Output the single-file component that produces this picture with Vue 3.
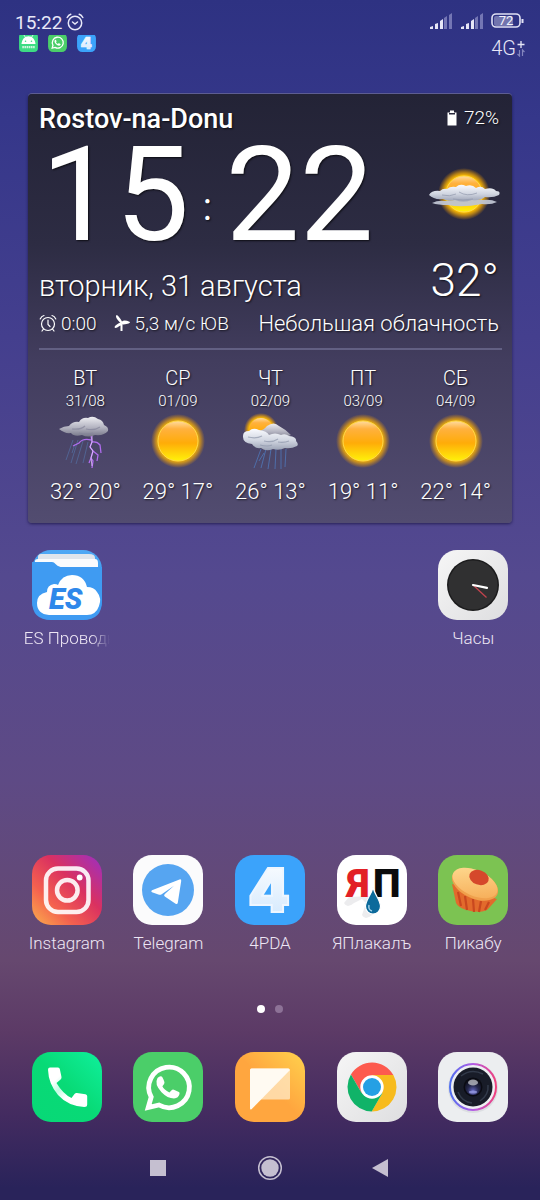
<script setup>
import { ref } from 'vue';

const time = ref({ hours: '15', minutes: '22' });
const battery = ref(72);

const forecast = ref([
  { day: 'ВТ', date: '31/08', icon: 'storm', high: 32, low: 20 },
  { day: 'СР', date: '01/09', icon: 'sun', high: 29, low: 17 },
  { day: 'ЧТ', date: '02/09', icon: 'shower', high: 26, low: 13 },
  { day: 'ПТ', date: '03/09', icon: 'sun', high: 19, low: 11 },
  { day: 'СБ', date: '04/09', icon: 'sun', high: 22, low: 14 }
]);

// Lettering that sits on top of an icon's artwork
const letters = {
  es: [{ text: 'ES', x: 17, y: 59, kind: 'logo-es' }],
  fourpda: [{ text: '4', x: 13, y: 57, kind: 'logo-four' }],
  yap: [
    { text: 'Я', x: 10, y: 42, kind: 'logo-yap red' },
    { text: 'П', x: 36, y: 42, kind: 'logo-yap' }
  ]
};

const topApps = [
  { icon: 'es', name: 'ES Проводник', long: true, side: 'first' },
  { icon: 'clock', name: 'Часы', side: 'last' }
];

const bottomApps = [
  { icon: 'instagram', name: 'Instagram' },
  { icon: 'telegram', name: 'Telegram' },
  { icon: 'fourpda', name: '4PDA' },
  { icon: 'yap', name: 'ЯПлакалъ' },
  { icon: 'pikabu', name: 'Пикабу' }
];

const dock = [
  { icon: 'phone', name: 'Телефон' },
  { icon: 'whatsapp', name: 'WhatsApp' },
  { icon: 'messages', name: 'Сообщения' },
  { icon: 'chrome', name: 'Chrome' },
  { icon: 'camera', name: 'Камера' }
];

const notifications = ['android', 'whatsapp', 'fourpda'];

const page = ref(0);
</script>

<template>
  <div class="screen">
    <!-- Shared icon sprite -->
    <svg class="sprite" aria-hidden="true">
      <defs>
        <linearGradient id="g-es" x1="0" y1="0" x2="0" y2="1">
          <stop offset="0" stop-color="#4fa9f5" /><stop offset="1" stop-color="#2383e8" />
        </linearGradient>
        <linearGradient id="g-grey" x1="0" y1="0" x2="1" y2="1">
          <stop offset="0" stop-color="#f6f6f6" /><stop offset="1" stop-color="#dedee0" />
        </linearGradient>
        <linearGradient id="g-insta" x1="0" y1="1" x2="1" y2="0">
          <stop offset="0" stop-color="#fbb04c" /><stop offset=".3" stop-color="#f4604f" />
          <stop offset=".6" stop-color="#da3160" /><stop offset="1" stop-color="#9b2fc4" />
        </linearGradient>
        <linearGradient id="g-four" x1="0" y1="0" x2="0" y2="1">
          <stop offset="0" stop-color="#ffffff" /><stop offset="1" stop-color="#cfe6fd" />
        </linearGradient>
        <linearGradient id="g-phone" x1="0" y1="1" x2="1" y2="0">
          <stop offset="0" stop-color="#08d877" /><stop offset=".5" stop-color="#08da76" /><stop offset="1" stop-color="#0ff09c" />
        </linearGradient>
        <linearGradient id="g-handset" x1="0" y1="0" x2="1" y2="1">
          <stop offset=".25" stop-color="#fff" /><stop offset=".42" stop-color="#c2fbe4" /><stop offset=".6" stop-color="#fff" />
        </linearGradient>
        <linearGradient id="g-msg" x1="0" y1="1" x2="1" y2="0">
          <stop offset=".5" stop-color="#ffa63f" /><stop offset="1" stop-color="#ffd24d" />
        </linearGradient>
        <linearGradient id="g-muffin" x1="0" y1="0" x2="1" y2="1">
          <stop offset="0" stop-color="#ffdd94" /><stop offset="1" stop-color="#f5a852" />
        </linearGradient>
        <linearGradient id="g-ring" x1="0" y1="0" x2="1" y2="0">
          <stop offset="0" stop-color="#4f6ff0" /><stop offset=".5" stop-color="#b45ce6" /><stop offset="1" stop-color="#f0407c" />
        </linearGradient>
        <radialGradient id="g-lens" cx=".5" cy=".75" r=".7">
          <stop offset="0" stop-color="#6467c4" /><stop offset=".5" stop-color="#25284e" /><stop offset="1" stop-color="#0d0e18" />
        </radialGradient>
        <radialGradient id="g-glow">
          <stop offset=".7" stop-color="#ffc000" /><stop offset=".82" stop-color="#ffb000" stop-opacity=".65" />
          <stop offset="1" stop-color="#ff9d00" stop-opacity="0" />
        </radialGradient>
        <linearGradient id="g-disc" x1="0" y1="0" x2="0" y2="1">
          <stop offset="0" stop-color="#ffdca0" /><stop offset=".2" stop-color="#ffb13e" />
          <stop offset=".55" stop-color="#ffac08" /><stop offset="1" stop-color="#fff20a" />
        </linearGradient>
        <linearGradient id="g-cloud" x1="0" y1="0" x2="0" y2="1">
          <stop offset="0" stop-color="#fafbff" /><stop offset=".55" stop-color="#d0d5e0" /><stop offset="1" stop-color="#9aa1b4" />
        </linearGradient>
        <linearGradient id="g-dark-cloud" x1="0" y1="0" x2="0" y2="1">
          <stop offset="0" stop-color="#eeeef2" /><stop offset=".55" stop-color="#b3b3c0" /><stop offset="1" stop-color="#777789" />
        </linearGradient>
      </defs>

      <symbol id="icon-android" viewBox="0 0 70 70">
        <rect width="70" height="70" rx="15" fill="#3ddc84" />
        <path d="M9 40C11 23 21 12 35 12s24 11 26 28z" fill="#fff" />
        <path d="M18 7l7 11M52 7l-7 11" stroke="#fff" stroke-width="3" />
        <circle cx="24" cy="30" r="3" fill="#3ddc84" /><circle cx="46" cy="30" r="3" fill="#3ddc84" />
        <path d="M12 52h46" stroke="#fff" stroke-width="8" stroke-dasharray="6 2" opacity=".75" />
      </symbol>

      <symbol id="icon-es" viewBox="0 0 70 70">
        <rect width="70" height="70" rx="19" fill="url(#g-es)" />
        <path d="M6 12V7q0-3 3-3h48q6 0 6 4v8H6z" fill="#dfe5ec" />
        <path d="M3 20V11q0-2 3-2h57q3 0 3 4v8H3z" fill="#fafbfd" />
        <path d="M0 12h20q2 0 3.500 2t5 3H70V51q0 19-19 19H19Q0 70 0 51z" fill="#3f9bf2" />
        <path d="M17 65Q5 64 5 53q0-9 10-11 0-7 7-8 3 0 4 1 4-10 14-10 12 0 15 12 7 0 10 5 5 6 2 14-3 9-12 9z" fill="#fff" />
      </symbol>

      <symbol id="icon-clock" viewBox="0 0 70 70">
        <rect width="70" height="70" rx="19" fill="url(#g-grey)" />
        <circle cx="35" cy="35" r="26" fill="#1c1c1d" />
        <circle cx="35" cy="35" r="24.500" fill="#303031" />
        <path d="M35 35l13.500 12.500" stroke="#c2434d" stroke-width="1.300" />
        <path d="M35 35l14 2.800" stroke="#fff" stroke-width="2.200" stroke-linecap="round" />
      </symbol>

      <symbol id="icon-instagram" viewBox="0 0 70 70">
        <rect width="70" height="70" rx="19" fill="url(#g-insta)" />
        <g fill="none" stroke="#fff" stroke-opacity=".9" stroke-width="4.500">
          <rect x="14" y="13.500" width="42.500" height="43.500" rx="12" />
          <circle cx="35.300" cy="35.300" r="10.300" />
        </g>
        <circle cx="47.700" cy="22.500" r="2.900" fill="#fff" />
      </symbol>

      <symbol id="icon-telegram" viewBox="0 0 70 70">
        <rect width="70" height="70" rx="19" fill="#fbfbfc" />
        <circle cx="35" cy="35" r="26" fill="#56a5f1" />
        <path d="M19 35.300l27.500-10.800q2-.6 1.700 1.500l-3.400 21.800q-.5 2-2.200.9L31.800 41.500q-1.300-1-.2-2.300L41 30.800l-12.300 8.500q-1.300.8-2.600.4L19 37.300q-1.600-.9 0-2z" fill="#fff" />
      </symbol>

      <symbol id="icon-fourpda" viewBox="0 0 70 70">
        <rect width="70" height="70" rx="19" fill="#3ba3fb" />
      </symbol>

      <symbol id="icon-yap" viewBox="0 0 70 70">
        <rect width="70" height="70" rx="19" fill="#fff" />
        <path d="M12 42l-5 6q3 6 10 0l8-4 4 4-4 12q3 6 10 0l8-7-6-12z" fill="#ececee" />
      </symbol>

      <symbol id="yap-drop" viewBox="0 0 70 70">
        <path d="M36 32.500c2 8 7.500 12.500 7.500 19a7.500 7.500 0 0 1-15 0c0-6.500 5.500-11 7.500-19z" fill="#0c6a9b" stroke="#fff" stroke-width="1.200" />
        <path d="M32 50q-1 5 3 6" fill="none" stroke="#9fd0e8" stroke-width="1.500" />
      </symbol>

      <symbol id="icon-pikabu" viewBox="0 0 70 70">
        <rect width="70" height="70" rx="19" fill="#7cc352" />
        <path d="M14 29l4 19q2 4 9 6.500t14 2.300q7 0 10-3.800L59 44z" fill="#e26a2c" />
        <path d="M20 37l3 14M27 41l2 14M35 44l1 13M43 46l-2 11M51 47l-4 8" stroke="#c9481f" stroke-width="2.200" />
        <ellipse cx="37" cy="29.500" rx="24.500" ry="14" transform="rotate(24 37 29.500)" fill="#f0a04c" />
        <ellipse cx="37" cy="28" rx="24" ry="12.800" transform="rotate(24 37 28)" fill="url(#g-muffin)" />
        <ellipse cx="41" cy="22.500" rx="10" ry="7.300" transform="rotate(20 41 22.500)" fill="#d5482b" />
      </symbol>

      <symbol id="icon-phone" viewBox="0 0 70 70">
        <rect width="70" height="70" rx="19" fill="url(#g-phone)" />
        <path d="M18 15.500h8q1.500 0 1.800 1.500l1.700 8q.3 1.500-.9 2.400L24.500 31Q31 42 39.500 46l3-4q1-1.200 2.400-1l8.600 1.300q1.700.3 1.700 2v8.200q0 2.500-3 2.500Q36 54 26 43 16.500 32 16 17.800q0-2.300 2-2.300z" fill="url(#g-handset)" />
      </symbol>

      <symbol id="icon-whatsapp" viewBox="0 0 70 70">
        <rect width="70" height="70" rx="19" fill="#4bce69" />
        <path d="M15.200 55.500l3-10.500A20.300 20.300 0 1 1 26 53z" fill="none" stroke="#fff" stroke-width="4.800" />
        <path d="M24.500 26q2.500-2.500 4.200-1.500 1 .6 2.700 5.500.3 1-.5 2.200l-1.500 2q1.500 3.500 7 6.300l2.500-2.600q.8-.8 2-.2l5 2.300q1 .6.600 2-1 4.200-5.500 4.400-6.500 0-12.500-6.200-7.500-8-4-14.200z" fill="#fff" />
      </symbol>

      <symbol id="icon-messages" viewBox="0 0 70 70">
        <rect width="70" height="70" rx="19" fill="url(#g-msg)" />
        <rect x="15" y="16.500" width="40" height="31" rx="1.500" fill="#ffe9c8" opacity=".75" />
        <path d="M16.500 16.500H53.500L55 18 16.500 57.300q-1.500.8-1.500-1V18q0-1.500 1.500-1.500z" fill="#fffaf2" />
      </symbol>

      <symbol id="icon-chrome" viewBox="0 0 70 70">
        <rect width="70" height="70" rx="19" fill="url(#g-grey)" />
        <path d="M13.930 22.500A24.500 24.500 0 0 1 56.360 23H35v12l-10.390 6z" fill="#fd5a4e" />
        <path d="M56.360 23A24.500 24.500 0 0 1 34.710 59.500L45.390 41 35 35V23z" fill="#f7bb1d" />
        <path d="M34.710 59.500A24.500 24.500 0 0 1 13.930 22.500L24.610 41 35 35l10.390 6z" fill="#10b368" />
        <circle cx="35" cy="35" r="11.700" fill="#fff" />
        <circle cx="35" cy="35" r="9" fill="#25a0e4" />
      </symbol>

      <symbol id="icon-camera" viewBox="0 0 70 70">
        <rect width="70" height="70" rx="19" fill="#eceef0" />
        <circle cx="35" cy="36" r="25" fill="#dcdee2" />
        <circle cx="35" cy="35" r="23" fill="#eef0f3" stroke="url(#g-ring)" stroke-width="2" />
        <circle cx="35" cy="35" r="19.500" fill="#181c28" />
        <path d="M23 24q10-8 22-2M20 40q4 10 14 11M50 33q1 10-8 16" fill="none" stroke="#323a4a" stroke-width="1.500" />
        <circle cx="35" cy="35" r="9.500" fill="#0a0b12" />
        <circle cx="35" cy="35" r="8" fill="url(#g-lens)" />
        <ellipse cx="35" cy="30.500" rx="5" ry="3" fill="#b9bcc4" opacity=".8" />
        <ellipse cx="35" cy="40" rx="4" ry="1.500" fill="#a3a6f0" opacity=".7" />
      </symbol>

      <symbol id="weather-sun" viewBox="0 0 60 60">
        <circle cx="30" cy="30" r="27" fill="url(#g-glow)" />
        <circle cx="30" cy="30" r="20" fill="url(#g-disc)" stroke="#ffd84a" stroke-width="1" />
      </symbol>

      <symbol id="weather-partly" viewBox="0 0 72 60">
        <circle cx="36" cy="29" r="26" fill="url(#g-glow)" />
        <circle cx="36" cy="29" r="18" fill="url(#g-disc)" stroke="#ffd84a" stroke-width="1" />
        <path d="M4 38q6-3 13-2 20-3 38-1 8-1 14 2-6 3-15 2-20 4-34 1-10 0-16-2z" fill="#bfc4d2" opacity=".95" />
        <path d="M1 30q3-5 11-4 3-3 7-2 3-3 9-2 4-4 10-1 6-2 10 2 5-3 9 1 8-2 11 2 5 0 3 4-6 3-14 2-5 4-13 3-9 3-17 0-7 2-12-1-9 1-14-4z" fill="url(#g-cloud)" />
        <path d="M14 30q8 2 14-1M31 27q8 5 18 1M25 34q10 2 20 0" fill="none" stroke="#9299ad" stroke-width="1" opacity=".7" />
      </symbol>

      <symbol id="weather-storm" viewBox="0 0 60 60">
        <path d="M18 29l-7 20M23 29l-7 23M28 30l-7 23M33 31l-5 21M20 33l-3 9" stroke="#536a9c" stroke-width="1" opacity=".8" fill="none" />
        <path d="M36 24l1 7-2 5 3 4-2 7 2 3-1 7M36 29q-8-2-12 3l-6 3M37 31q5-1 8 3l1 8M38 40l5 4-1 6M36 47l-2 5" fill="none" stroke="#b16df0" stroke-width="1.300" />
        <path d="M37 24l0 7-2 5 3 4-2 7 1 8" fill="none" stroke="#e6c8ff" stroke-width=".8" />
        <path d="M4 18q5-3 10-3 4-5 10-4 3-5 9-4 5-3 10 1 5 1 6 6 5 2 4 6-4 5-13 4-7 3-13 0-8 2-11-2-6 1-12-4z" fill="url(#g-dark-cloud)" />
        <path d="M17 18q9 1 13-3M31 18q8 2 14-2M24 22q8 2 14 0" fill="none" stroke="#84849a" stroke-width="1.200" opacity=".7" />
      </symbol>

      <symbol id="weather-shower" viewBox="0 0 60 60">
        <circle cx="21" cy="19" r="17" fill="url(#g-glow)" />
        <circle cx="21" cy="19" r="12" fill="url(#g-disc)" />
        <path d="M21 38l-7 19M26 38l-5 19M31 38l-3 20M36 38l-1 20M41 38l0 20M46 38l-1 18M24 42l-5 8" stroke="#4f74b4" stroke-width="1" fill="none" opacity=".85" />
        <path d="M19 20q5-1 8-5 7-5 12 0 6 3 12 9-9 5-22 3z" fill="url(#g-dark-cloud)" />
        <path d="M3 25q0-5 6-5 4-4 10-1 8 1 10 5 6-3 12 0 4-2 8 1 8 1 7 5 3 3 1 5-6 3-12 2-6 3-12 1-7 3-12-1-6 1-9-4-9-1-9-7z" fill="url(#g-cloud)" />
        <path d="M8 26q8 2 14-1M24 30q8 2 14-2M38 31q6 1 11-1M20 34q8 2 12 0" fill="none" stroke="#8f97ab" stroke-width="1.200" opacity=".7" />
      </symbol>
    </svg>

    <header class="status-bar">
      <div class="status-left">
        <div class="status-time">
          <span>{{ time.hours }}:{{ time.minutes }}</span>
          <svg class="status-alarm" viewBox="0 0 18 18">
            <g fill="none" stroke="currentColor" stroke-width="1.500" stroke-linecap="round">
              <circle cx="9" cy="10" r="6.700" />
              <path d="M1.200 4.500Q2.500 2 4.800 1.200M13.200 1.200q2.300.8 3.600 3.300M6.500 9L9 11l2.500-2" />
            </g>
          </svg>
        </div>
        <div class="notifications">
          <svg v-for="n in notifications" :key="n" class="mini-icon" viewBox="0 7 70 63">
            <use :href="'#icon-' + n" width="70" height="70" />
            <text v-for="l in letters[n]" :key="l.text" :class="l.kind" :x="l.x" :y="l.y">{{ l.text }}</text>
          </svg>
        </div>
      </div>
      <div class="status-right">
        <div class="status-signals">
          <svg v-for="n in 2" :key="n" class="signal" viewBox="0 0 23 16">
            <path d="M1 16v-2l3-1v3zM6 16v-5l3-1v6zM11 16V8l3-2v10z" fill="#e6e6f6" />
            <path d="M15 16V5l3-2v13zM20 16V2l3-2v16z" fill="#7476b4" />
          </svg>
          <svg class="battery" viewBox="0 0 34 16">
            <rect x="3" y="3" width="19" height="10" rx="2" fill="#7274ae" />
            <rect x="1" y="1" width="28" height="13" rx="4" fill="none" stroke="#e0e0f4" stroke-width="1.600" />
            <path d="M31.500 6v4" stroke="#e0e0f4" stroke-width="2" />
            <text class="battery-text" x="15" y="12">{{ battery }}</text>
          </svg>
        </div>
        <div class="network">
          <span>4G</span>
          <svg class="network-plus" viewBox="0 0 8 17">
            <path d="M4 1v7M.500 4.500h7" stroke="#e6e6f6" stroke-width="1.300" />
            <path d="M2.500 10v6l-2-2M5.500 16v-6l2 2" stroke="#8385bd" stroke-width="1.200" fill="none" />
          </svg>
        </div>
      </div>
    </header>

    <section class="widget">
      <div class="widget-head">
        <h1 class="city">Rostov-na-Donu</h1>
        <div class="charge">
          <svg class="charge-icon" viewBox="0 0 10 16">
            <path d="M3 .500h4v2h2.500v13h-9v-13H3z" fill="#fff" />
            <path d="M2 3h6v1.500H2z" fill="#26263b" />
          </svg>
          {{ battery }}%
        </div>
      </div>

      <div class="widget-main">
        <div class="clock">
          <span>{{ time.hours }}</span>
          <span class="colon">:</span>
          <span>{{ time.minutes }}</span>
        </div>
        <svg class="now-icon" viewBox="0 0 72 60"><use href="#weather-partly" width="72" height="60" /></svg>
      </div>

      <div class="widget-date">
        <span class="date">вторник, 31 августа</span>
        <span class="temp">32°</span>
      </div>

      <div class="widget-details">
        <span class="detail">
          <svg class="detail-icon" viewBox="0 0 18 18">
            <g fill="none" stroke="#fff" stroke-width="1.200" stroke-linecap="round">
              <circle cx="9" cy="10" r="6.500" />
              <path d="M1.200 5Q2.500 2 5 1.500M13 1.500q2.500.5 3.800 3.500M9 6v4.500l2 2M4.500 15L3 17M13.500 15l1.500 2" />
            </g>
          </svg>
          0:00
        </span>
        <span class="detail">
          <svg class="detail-icon" viewBox="0 0 18 18">
            <path d="M7 8.500Q1.500 3 3.500 1q1.500-.5 5.500 6.500 2-2 8 .5.500 1.500-6.500 2.500-1.500.5-3.500-2z" fill="#fff" />
            <path d="M7.500 8.500q-5 2-6 4.500.5 2.500 5-1l1-.5V17H9.500v-7z" fill="#fff" />
          </svg>
          5,3 м/с ЮВ
        </span>
        <span class="condition">Небольшая облачность</span>
      </div>

      <div class="forecast">
        <div v-for="d in forecast" :key="d.date" class="day">
          <span class="day-name">{{ d.day }}</span>
          <span class="day-date">{{ d.date }}</span>
          <svg class="day-icon" viewBox="0 0 60 60"><use :href="'#weather-' + d.icon" width="60" height="60" /></svg>
          <span class="day-temp">{{ d.high }}° {{ d.low }}°</span>
        </div>
      </div>
    </section>

    <main class="home">
      <div class="app-row">
        <button v-for="app in topApps" :key="app.icon" type="button" class="app" :class="app.side">
          <svg class="app-icon" viewBox="0 0 70 70">
            <use :href="'#icon-' + app.icon" width="70" height="70" />
            <text v-for="l in letters[app.icon]" :key="l.text" :class="l.kind" :x="l.x" :y="l.y">{{ l.text }}</text>
          </svg>
          <span class="app-name" :class="{ fade: app.long }">{{ app.name }}</span>
        </button>
      </div>
      <div class="app-row">
        <button v-for="app in bottomApps" :key="app.icon" type="button" class="app">
          <svg class="app-icon" viewBox="0 0 70 70">
            <use :href="'#icon-' + app.icon" width="70" height="70" />
            <text v-for="l in letters[app.icon]" :key="l.text" :class="l.kind" :x="l.x" :y="l.y">{{ l.text }}</text>
            <use v-if="app.icon === 'yap'" href="#yap-drop" width="70" height="70" />
          </svg>
          <span class="app-name">{{ app.name }}</span>
        </button>
      </div>
    </main>

    <div class="pages">
      <button v-for="n in 2" :key="n" type="button" class="page-dot" :class="{ active: page === n - 1 }"
        :aria-label="'Экран ' + n" @click="page = n - 1"></button>
    </div>

    <footer class="dock">
      <button v-for="app in dock" :key="app.icon" type="button" class="app" :aria-label="app.name">
        <svg class="app-icon" viewBox="0 0 70 70"><use :href="'#icon-' + app.icon" width="70" height="70" /></svg>
      </button>
    </footer>

    <nav class="nav-bar">
      <button type="button" class="nav-button" aria-label="Недавние">
        <svg viewBox="0 0 26 26"><rect x="3" y="5" width="16" height="16" fill="#c5bfd0" /></svg>
      </button>
      <button type="button" class="nav-button" aria-label="Домой">
        <svg viewBox="0 0 26 26">
          <circle cx="13" cy="13" r="11.300" fill="none" stroke="#c5bfd0" stroke-width="1.500" />
          <circle cx="13" cy="13" r="8.700" fill="#c5bfd0" />
        </svg>
      </button>
      <button type="button" class="nav-button" aria-label="Назад">
        <svg viewBox="0 0 26 26"><path d="M5 13L21 4v18z" fill="#c5bfd0" /></svg>
      </button>
    </nav>
  </div>
</template>

<style>
body {
  margin: 0;
  background: #2a2357;
}
</style>

<style scoped>
.screen {
  display: flex;
  flex-direction: column;
  box-sizing: border-box;
  min-height: 100vh;
  font-family: Roboto, 'Noto Sans', sans-serif;
  color: #fff;
  background: linear-gradient(#2e3282 0%, #35378a 10%, #443f8e 28%, #54498f 48%, #5e4a85 65%, #66486f 80%, #5c3a66 86%, #432b60 93%, #29235a 99%);
}

.sprite {
  position: absolute;
  width: 0;
  height: 0;
}

.logo-es {
  font: italic 900 29px Roboto, sans-serif;
  fill: #2f88ea;
}

.logo-four {
  font: 900 60px Inter, sans-serif;
  fill: url(#g-four);
  stroke: #eef6ff;
  stroke-width: 2px;
}

.logo-yap {
  font: 900 39px Roboto, sans-serif;
  fill: #0b0b0c;
}

.logo-yap.red {
  fill: #e21f26;
}

/* Status bar */
.status-bar {
  display: flex;
  justify-content: space-between;
  padding: 10px 15px 0;
  color: #e8e8f8;
}

.status-time {
  display: flex;
  align-items: center;
  gap: 4px;
  height: 24px;
  font-size: 19px;
  font-weight: 400;
}

.status-alarm {
  width: 18px;
  height: 18px;
}

.notifications {
  display: flex;
  gap: 10px;
  padding: 1px 0 0 4px;
}

.mini-icon {
  width: 19px;
  height: 17px;
}

.status-right {
  display: flex;
  flex-direction: column;
  align-items: flex-end;
}

.status-signals {
  display: flex;
  align-items: center;
  gap: 8px;
  height: 22px;
}

.signal {
  width: 23px;
  height: 16px;
}

.battery {
  width: 34px;
  height: 16px;
}

.battery-text {
  font: 13px Roboto, sans-serif;
  fill: #f4f4fc;
  text-anchor: middle;
}

.network {
  display: flex;
  align-items: center;
  gap: 1px;
  height: 32px;
  font-size: 20px;
  font-weight: 300;
}

.network-plus {
  width: 8px;
  height: 17px;
}

/* Weather widget */
.widget {
  margin: 30px 28px 0;
  padding: 11px 10px 10px 11px;
  border-radius: 4px;
  background: linear-gradient(#232336, #2d2c43 35%, #423d5e 62%, #524c70);
  box-shadow: 0 -1px 0 #5d5d92, 0 1px 3px rgba(20, 15, 60, 0.7);
  text-shadow: 1px 1px 2px rgba(0, 0, 0, 0.7);
  font-weight: 300;
}

.widget-head {
  display: flex;
  justify-content: space-between;
  height: 30px;
  line-height: 28px;
  padding-right: 3px;
}

.city {
  margin: 0;
  font-size: 27px;
  font-weight: 500;
}

.charge {
  display: flex;
  align-items: center;
  gap: 7px;
  height: 26px;
  font-size: 19px;
}

.charge-icon {
  width: 10px;
  height: 16px;
}

.widget-main {
  display: flex;
  justify-content: space-between;
  align-items: center;
  height: 120px;
  padding: 0 2px;
}

.clock {
  display: flex;
  align-items: center;
  font-size: 132px;
  font-weight: 400;
  line-height: 120px;
}

.colon {
  width: 36px;
  padding-top: 24px;
  font-size: 38px;
  line-height: 40px;
  text-align: center;
}

.now-icon {
  width: 72px;
  height: 60px;
}

.widget-date {
  display: flex;
  justify-content: space-between;
  align-items: baseline;
  height: 50px;
  padding-right: 3px;
}

.date {
  font-size: 29px;
}

.temp {
  font-size: 46px;
  line-height: 50px;
}

.widget-details {
  display: flex;
  align-items: center;
  gap: 16px;
  height: 36px;
  padding: 0 3px 7px 0;
  border-bottom: 2px solid rgba(140, 140, 180, 0.45);
  font-size: 19px;
}

.detail {
  display: flex;
  align-items: center;
  gap: 4px;
  white-space: nowrap;
}

.detail-icon {
  width: 18px;
  height: 18px;
}

.condition {
  margin-left: auto;
  font-size: 22px;
  white-space: nowrap;
}

.forecast {
  display: grid;
  grid-template-columns: repeat(5, 1fr);
  padding-top: 15px;
}

.day {
  display: flex;
  flex-direction: column;
  align-items: center;
}

.day-name {
  font-size: 20px;
  line-height: 26px;
}

.day-date {
  font-size: 15px;
  line-height: 20px;
}

.day-icon {
  width: 60px;
  height: 60px;
}

.day-temp {
  font-size: 22px;
  line-height: 42px;
}

/* Home screen apps */
.home {
  display: flex;
  flex: 1;
  flex-direction: column;
  justify-content: space-between;
  gap: 24px;
  padding: 27px 16px 0;
}

.app-row,
.dock {
  display: grid;
  grid-template-columns: repeat(5, 1fr);
}

.app {
  display: flex;
  flex-direction: column;
  align-items: center;
  gap: 6px;
  padding: 0;
  border: 0;
  background: none;
  color: #ede6f4;
  font: 300 17px Roboto, 'Noto Sans', sans-serif;
  cursor: pointer;
}

.app.first {
  grid-column: 1;
}

.app.last {
  grid-column: 5;
}

.app-icon {
  width: 70px;
  height: 70px;
}

.app-name {
  line-height: 24px;
  white-space: nowrap;
}

.app-name.fade {
  width: 86px;
  overflow: hidden;
  text-align: left;
  mask-image: linear-gradient(to right, #000 78%, transparent);
}

.pages {
  display: flex;
  justify-content: center;
  gap: 10px;
  padding: 50px 0 39px;
}

.page-dot {
  width: 8px;
  height: 8px;
  padding: 0;
  border: 0;
  border-radius: 50%;
  background: #8d7297;
}

.page-dot.active {
  background: #fff;
}

.dock {
  padding: 0 16px;
}

.nav-bar {
  display: flex;
  justify-content: center;
  gap: 84px;
  padding: 33px 0 19px;
}

.nav-button {
  width: 26px;
  height: 26px;
  padding: 0;
  border: 0;
  background: none;
}

.nav-button svg {
  display: block;
  width: 26px;
  height: 26px;
}
</style>
